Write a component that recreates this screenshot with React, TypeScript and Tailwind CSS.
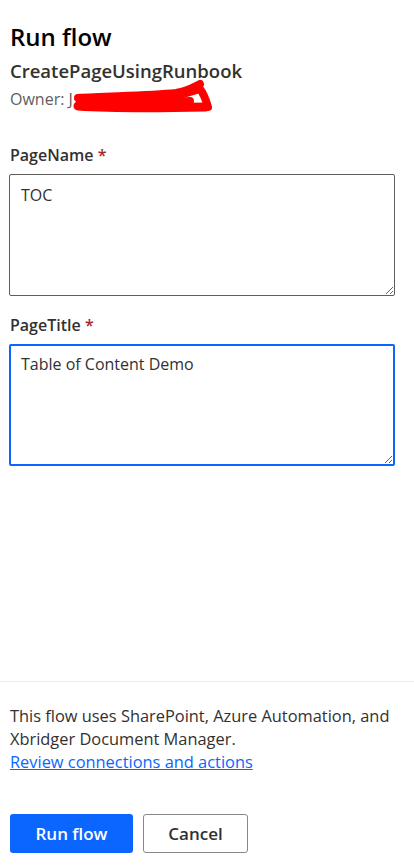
import { useState } from "react";

const font = { fontFamily: '"Open Sans", "Noto Sans", sans-serif' };

const App = () => {
  const [pageName, setPageName] = useState("TOC");
  const [pageTitle, setPageTitle] = useState("Table of Content Demo");

  return (
    <div className="w-[414px] h-[865px] bg-white flex flex-col text-[#242424]" style={font}>
      <div className="px-[10px] pt-[21px] flex-1">
        <h1 className="text-[24px] font-semibold leading-[32px] text-black">Run flow</h1>
        <h2 className="mt-[5px] text-[18.5px] font-semibold leading-[26px] text-[#323130]">CreatePageUsingRunbook</h2>
        <div className="relative mt-[4px] text-[16px] leading-[22px] text-[#605e5c]">
          Owner: J
          {/* redaction scribble */}
          <svg
            className="absolute left-[58px] top-[-10px]"
            width="146"
            height="38"
            viewBox="0 0 146 38"
            fill="none"
          >
            <path
              d="M10 20 C40 18 80 18 108 15 C120 13 126 9 132 6 C124 12 104 17 84 20 C104 20 120 15 132 11 C136 16 138 22 140 29"
              stroke="#ff0000"
              strokeWidth="8"
              strokeLinecap="round"
              strokeLinejoin="round"
            />
            <path
              d="M10 28 C40 30 90 30 138 29"
              stroke="#ff0000"
              strokeWidth="9"
              strokeLinecap="round"
            />
            <path
              d="M12 24 C50 24 90 25 122 23"
              stroke="#ff0000"
              strokeWidth="8"
              strokeLinecap="round"
            />
          </svg>
        </div>

        <label className="block mt-[34px] text-[16px] font-semibold leading-[22px] text-[#323130]">
          PageName <span className="text-[#a4262c]">*</span>
        </label>
        <textarea
          value={pageName}
          onChange={(e) => setPageName(e.target.value)}
          className="block mt-[8px] ml-[-1px] w-[386px] h-[122px] rounded-[2px] border border-[#605e5c] px-[11px] pt-[9px] pb-[7px] text-[16px] leading-[22px] text-[#323130] outline-none"
        />

        <label className="block mt-[18px] text-[16px] font-semibold leading-[22px] text-[#323130]">
          PageTitle <span className="text-[#a4262c]">*</span>
        </label>
        <textarea
          value={pageTitle}
          onChange={(e) => setPageTitle(e.target.value)}
          className="block mt-[8px] ml-[-1px] w-[386px] h-[122px] rounded-[2px] border-2 border-[#0a66ff] px-[10px] pt-[7px] pb-[6px] text-[16px] leading-[22px] text-[#323130] outline-none"
        />
      </div>

      <div className="border-t border-[#edebe9] px-[10px] pt-[22px] pb-[12px]">
        <p className="text-[16.4px] leading-[23px] text-[#323130]">
          This flow uses SharePoint, Azure Automation, and Xbridger Document Manager.
        </p>
        <a href="#" className="text-[16.4px] leading-[23px] text-[#0a66ff] underline">
          Review connections and actions
        </a>
        <div className="mt-[40px] flex gap-[10px]">
          <button className="w-[123px] h-[39px] rounded-[3px] bg-[#0a66ff] text-white text-[17px] font-semibold">
            Run flow
          </button>
          <button className="w-[105px] h-[39px] rounded-[3px] border border-[#8a8886] bg-white text-[#323130] text-[17px] font-semibold">
            Cancel
          </button>
        </div>
      </div>
    </div>
  );
};

export default App;
